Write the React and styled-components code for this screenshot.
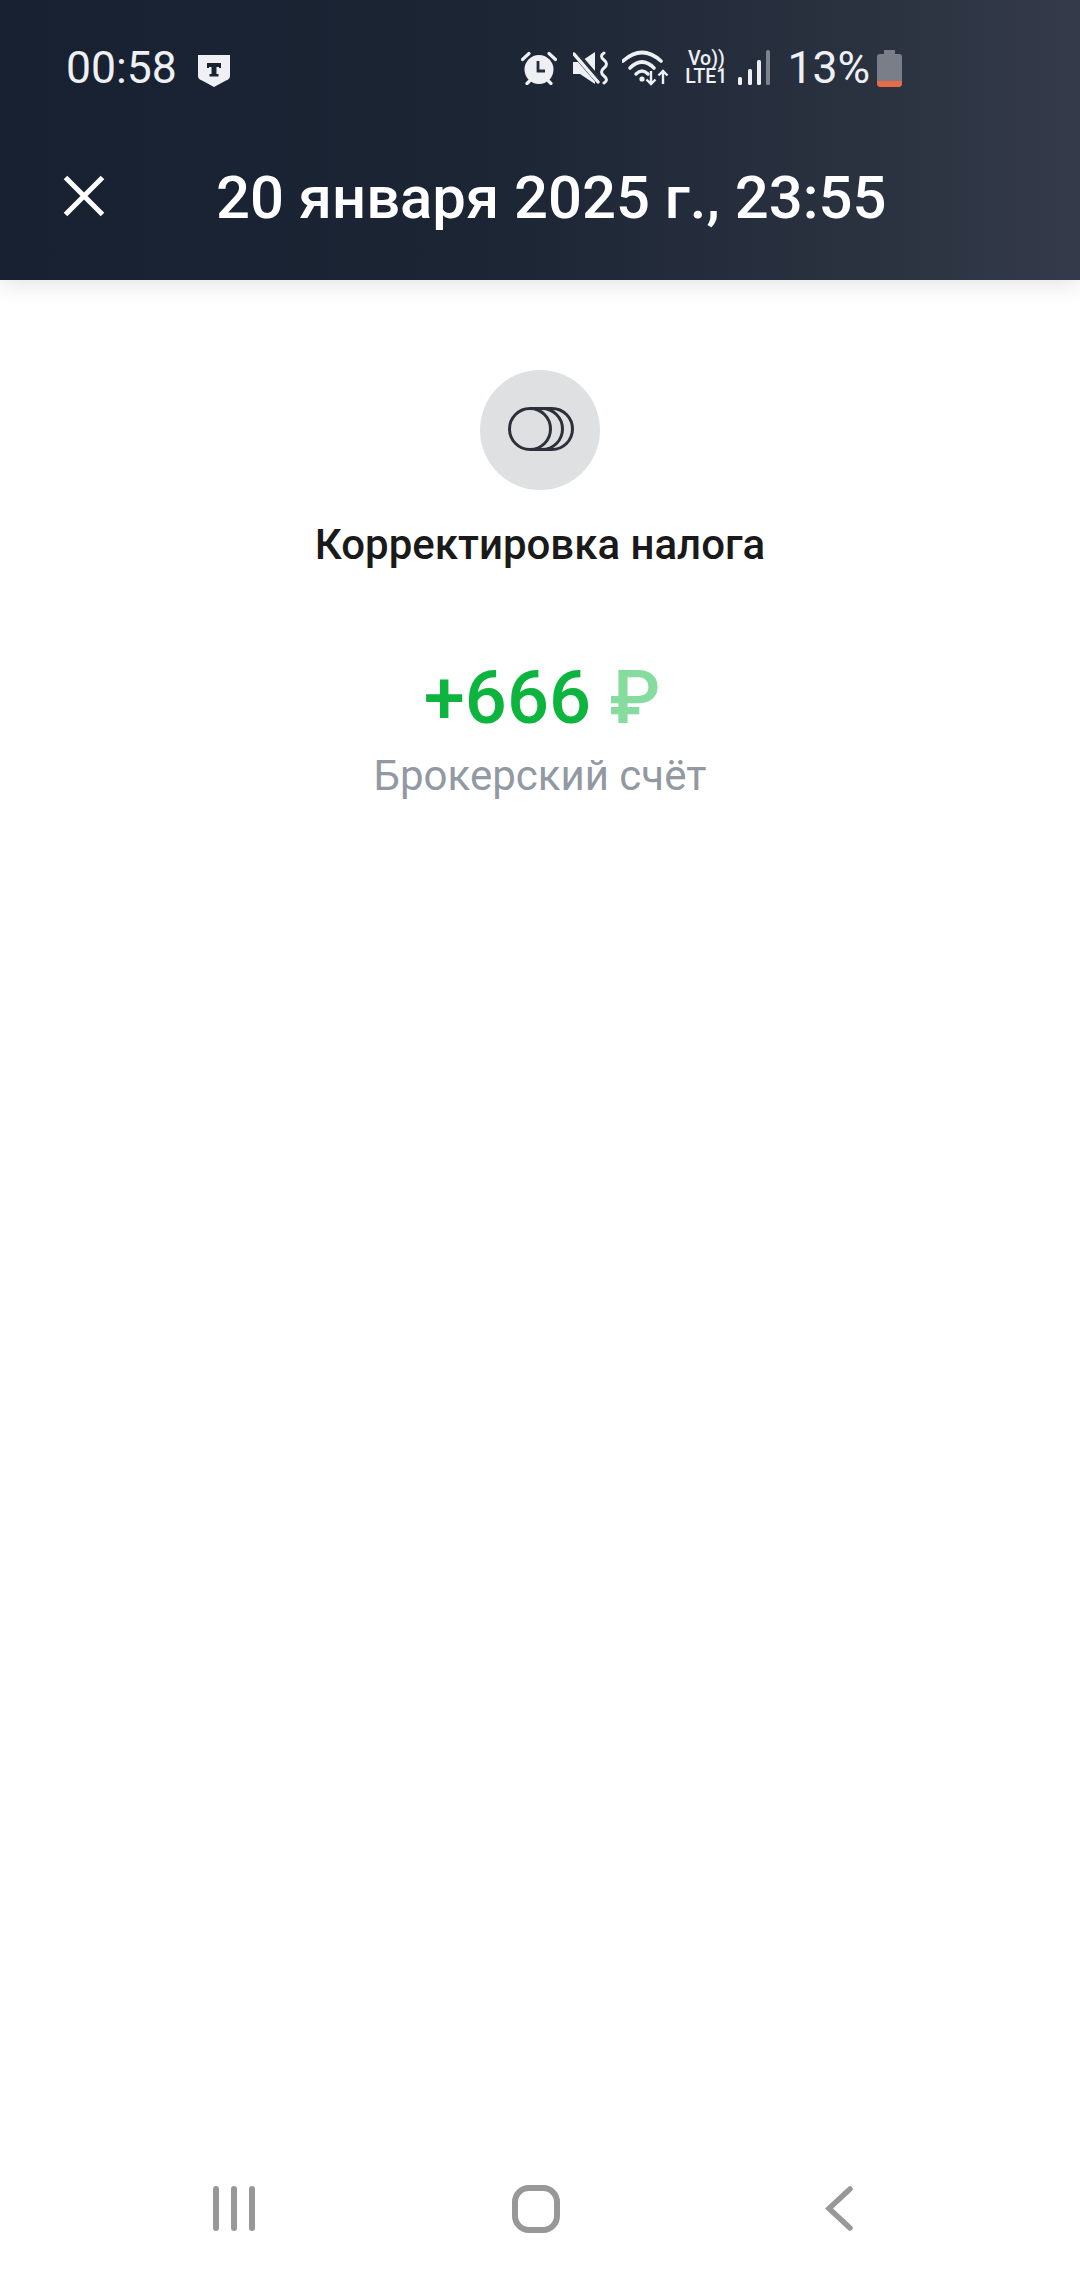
import React from "react";
import styled, { createGlobalStyle } from "styled-components";

const GlobalStyle = createGlobalStyle`
  html, body {
    margin: 0;
    background: #fff;
    font-family: Roboto, "Liberation Sans", sans-serif;
  }
`;

const Screen = styled.div`
  width: 1080px;
  height: 2280px;
  display: flex;
  flex-direction: column;
  background: #fff;
  overflow: hidden;
`;

// ---------- Header ----------
const Header = styled.header`
  height: 280px;
  flex: none;
  display: flex;
  flex-direction: column;
  background: linear-gradient(90deg, #182131 0%, #1c2534 45%, #2c3442 85%, #343a4a 100%);
  box-shadow: 0 6px 20px rgba(0, 0, 0, 0.1);
`;

const StatusBar = styled.div`
  height: 136px;
  flex: none;
  display: flex;
  align-items: center;
  padding: 0 178px 0 66px;
  color: #eef0f4;
`;

const Time = styled.span`
  font-size: 44.5px;
  line-height: 1;
`;

const Shield = styled.svg`
  width: 32px;
  height: 32px;
  margin: 5px 0 0 21px;
`;

const StatusIcons = styled.div`
  margin-left: auto;
  display: flex;
  align-items: center;
`;

const StatusIcon = styled.svg`
  display: block;
  flex: none;
  margin-left: ${(p) => p.$gap || 0}px;
`;

const Volte = styled.div`
  margin-left: 15px;
  width: 44px;
  display: flex;
  flex-direction: column;
  align-items: center;
  white-space: nowrap;
  font-size: 19.5px;
  line-height: 18px;
  font-weight: 500;
`;

const Percent = styled.span`
  margin-left: 17px;
  font-size: 44.5px;
  line-height: 1;
`;

const TitleRow = styled.div`
  height: 120px;
  flex: none;
  display: flex;
  align-items: center;
  padding-left: 63px;
`;

const CloseIcon = styled.svg`
  width: 42px;
  height: 42px;
  flex: none;
`;

const Title = styled.h1`
  margin: 6px 0 0 111px;
  font-size: 59.8px;
  line-height: 1;
  font-weight: 500;
  color: #fff;
  white-space: nowrap;
`;

// ---------- Operation ----------
const Operation = styled.main`
  display: flex;
  flex-direction: column;
  align-items: center;
  padding-top: 90px;
`;

const Round = styled.div`
  width: 120px;
  height: 120px;
  border-radius: 50%;
  background: #dee0e2;
  display: flex;
  align-items: center;
  justify-content: center;
`;

const CoinsIcon = styled.svg`
  width: 66px;
  height: 44px;
  margin: 0 0 2px 2px;
`;

const Name = styled.div`
  margin-top: 31px;
  font-size: 42px;
  line-height: 48px;
  font-weight: 500;
  color: #1a1a1b;
`;

const Amount = styled.div`
  margin-top: 87px;
  padding-left: 4px;
  font-size: 74px;
  line-height: 84px;
  font-weight: 500;
  color: #0db53e;
`;

const Currency = styled.span`
  color: #86dc9f;
`;

const Account = styled.div`
  margin-top: 12px;
  font-size: 42px;
  line-height: 48px;
  color: #9299a2;
`;

// ---------- Navigation bar ----------
const NavBar = styled.nav`
  margin-top: auto;
  height: 143px;
  flex: none;
  display: flex;
  align-items: center;
  padding-left: 213px;
`;

const NavIcon = styled.svg`
  display: block;
  flex: none;
  margin-left: ${(p) => p.$gap || 0}px;
  color: #989898;
`;

export default function App() {
  return (
    <>
      <GlobalStyle />
      <Screen>
        <Header>
          <StatusBar>
            <Time>00:58</Time>
            <Shield viewBox="0 0 32 32">
              <path d="M0 0H32V21Q32 24 28 25.5L16 32L4 25.5Q0 24 0 21Z" fill="#eef0f4" />
              <path d="M9 8H23V13H21V12H18.5V19H20.5V21.5H11.5V19H13.5V12H11V13H9Z" fill="#1a2232" />
            </Shield>
            <StatusIcons>
              <StatusIcon width="36" height="34" viewBox="0 0 36 34" fill="none">
                <circle cx="18" cy="18.5" r="14.5" fill="#eef0f4" />
                <path d="M1.5 8.5L8 2.5M34.5 8.5L28 2.5M6 32.5L9.5 29M30 32.5L26.5 29" stroke="#eef0f4" strokeWidth="3.2" strokeLinecap="round" />
                <path d="M17 10V20H24" stroke="#262d3b" strokeWidth="2.8" />
              </StatusIcon>
              <StatusIcon $gap={16} width="37" height="34" viewBox="0 0 37 34" fill="none">
                <path d="M0 11H7L22 1V33L7 23H0Z" fill="#eef0f4" />
                <path d="M1 1L27 31" stroke="#262d3b" strokeWidth="7" />
                <path d="M1 3L25 31" stroke="#eef0f4" strokeWidth="3.4" strokeLinecap="round" />
                <path d="M31 2Q26 5 31 9T31 17T31 25T31 32" stroke="#eef0f4" strokeWidth="3" strokeLinecap="round" />
              </StatusIcon>
              <StatusIcon $gap={12} width="47" height="36" viewBox="0 0 47 36" fill="none">
                <path d="M1 11Q20 -6 39 11" stroke="#eef0f4" strokeWidth="3.6" strokeLinecap="round" />
                <path d="M8 18Q20 6 32 18" stroke="#eef0f4" strokeWidth="3.6" strokeLinecap="round" />
                <path d="M14 24Q20 18 26 24" stroke="#eef0f4" strokeWidth="3.4" strokeLinecap="round" />
                <circle cx="20" cy="29" r="2.6" fill="#eef0f4" />
                <path d="M29 21V34M24.5 29.5L29 34L33.5 29.5" stroke="#eef0f4" strokeWidth="2.4" />
                <path d="M41 34V21M36.5 25.5L41 21L45.5 25.5" stroke="#eef0f4" strokeWidth="2.4" />
              </StatusIcon>
              <Volte>
                <span>Vo))</span>
                <span>LTE1</span>
              </Volte>
              <StatusIcon $gap={10} width="32" height="36" viewBox="0 0 32 36" fill="none">
                <rect x="0" y="27" width="4" height="8" rx="1.5" fill="#eef0f4" />
                <rect x="10" y="19" width="4" height="16" rx="1.5" fill="#eef0f4" />
                <rect x="19" y="10" width="4" height="25" rx="1.5" fill="#eef0f4" />
                <rect x="28" y="0" width="4" height="35" rx="1.5" fill="#7d828c" />
              </StatusIcon>
              <Percent>13%</Percent>
              <StatusIcon $gap={7} width="25" height="37" viewBox="0 0 25 37" fill="none">
                <path d="M7 0H18V4H22Q25 4 25 7V33Q25 37 21 37H4Q0 37 0 33V7Q0 4 3 4H7Z" fill="#7a7e89" />
                <path d="M0 31H25V33Q25 37 21 37H4Q0 37 0 33Z" fill="#e96a47" />
              </StatusIcon>
            </StatusIcons>
          </StatusBar>
          <TitleRow>
            <CloseIcon viewBox="0 0 42 42" fill="none">
              <path d="M2.5 2.5L39.5 39.5M39.5 2.5L2.5 39.5" stroke="#fff" strokeWidth="5" />
            </CloseIcon>
            <Title>20 января 2025 г., 23:55</Title>
          </TitleRow>
        </Header>

        <Operation>
          <Round>
            <CoinsIcon viewBox="0 0 66 44" fill="none" stroke="#2b303b" strokeWidth="3">
              <circle cx="22" cy="22" r="20.5" />
              <path d="M22 1.5H34A20.5 20.5 0 0 1 34 42.5H22" />
              <path d="M34 1.5H44A20.5 20.5 0 0 1 44 42.5H34" />
            </CoinsIcon>
          </Round>
          <Name>Корректировка налога</Name>
          <Amount>
            +666 <Currency>₽</Currency>
          </Amount>
          <Account>Брокерский счёт</Account>
        </Operation>

        <NavBar>
          <NavIcon width="42" height="45" viewBox="0 0 42 45" fill="none" stroke="currentColor" strokeWidth="6" strokeLinecap="round">
            <path d="M3 3V42M21 3V42M39 3V42" />
          </NavIcon>
          <NavIcon $gap={257} width="48" height="48" viewBox="0 0 48 48" fill="none" stroke="currentColor" strokeWidth="6">
            <rect x="3" y="3" width="42" height="42" rx="14" />
          </NavIcon>
          <NavIcon $gap={265} width="28" height="45" viewBox="0 0 28 45" fill="none" stroke="currentColor" strokeWidth="5.5" strokeLinecap="round">
            <path d="M25 3L4 22.5L25 42" />
          </NavIcon>
        </NavBar>
      </Screen>
    </>
  );
}
